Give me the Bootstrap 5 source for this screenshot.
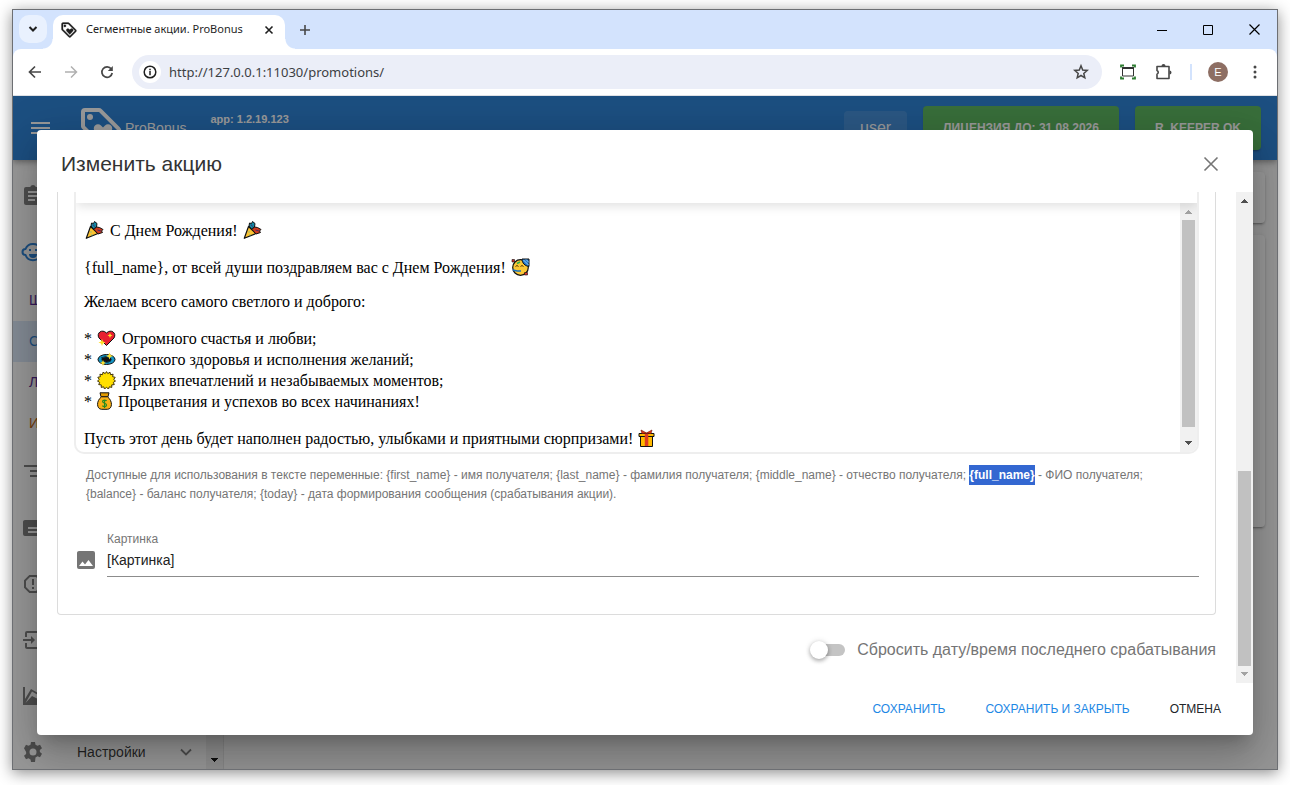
<!DOCTYPE html>
<html lang="ru">
<head>
<meta charset="utf-8">
<meta name="viewport" content="width=device-width, initial-scale=1">
<title>Сегментные акции. ProBonus</title>
<link href="https://cdn.jsdelivr.net/npm/bootstrap@5.3.0/dist/css/bootstrap.min.css" rel="stylesheet">
<style>
  body { font-family: "Liberation Sans", Arial, sans-serif; font-size: 14px; background: #fff; padding: 9px 12px 15px; height: 100vh; overflow: hidden; }
  svg { display: block; flex: none; }
  button { border: 0; background: none; padding: 0; color: inherit; }
  .browser { height: 100%; border: 1px solid #6d6f73; box-shadow: 0 3px 14px rgba(0,0,0,.45); background: #d3e3fd; }

  /* browser chrome */
  .tabstrip { height: 39px; flex: none; font-family: "Noto Sans", sans-serif; padding-left: 6px; color: #1f1f1f; }
  .tab-search { width: 28px; height: 28px; margin-top: 5px; border-radius: 10px; background: #e9f1fe; }
  .tab { position: relative; width: 232px; height: 34px; margin: 5px 0 0 6px; padding: 0 10px 5px 7px; background: #fff; border-radius: 10px 10px 0 0; font-size: 11px; }
  .tab::before, .tab::after { content: ""; position: absolute; bottom: 0; width: 10px; height: 10px; }
  .tab::before { left: -10px; background: radial-gradient(circle at 0 0, transparent 9px, #fff 10px); }
  .tab::after { right: -10px; background: radial-gradient(circle at 100% 0, transparent 9px, #fff 10px); }
  .tab-add { height: 39px; width: 40px; }
  .win-btn { width: 46px; height: 39px; }
  .addressbar { height: 47px; flex: none; background: #fff; border-bottom: 1px solid #dfe1e5; border-radius: 8px 8px 0 0; padding: 0 11px; color: #474747; }
  .tool { width: 22px; height: 22px; margin-right: 14px; }
  .omnibox { height: 34px; border-radius: 17px; background: #ebeef8; padding: 0 12px 0 7px; }
  .site-info { width: 22px; height: 22px; border-radius: 50%; background: #fff; }
  .omnibox input { border: 0; background: none; outline: 0; padding: 0; color: #3c4043; font: 13px "Noto Sans", sans-serif; min-width: 0; }
  .avatar { width: 20px; height: 20px; border-radius: 50%; background: #8d6e63; color: #fff; font-size: 11px; }

  /* application */
  .app { position: relative; flex: 1 1 0; min-height: 0; overflow: hidden; background: #fafafa; }
  .appbar { height: 64px; flex: none; background: #1976d2; color: #fff; padding: 0 16px 0 14px; position: relative; z-index: 1; box-shadow: 0 2px 4px -1px rgba(0,0,0,.2), 0 4px 5px rgba(0,0,0,.14), 0 1px 10px rgba(0,0,0,.12); }
  .version { font-size: 11px; font-weight: 700; line-height: 16px; padding-bottom: 18px; }
  .user-chip { background: rgba(255,255,255,.12); border-radius: 4px; height: 34px; font-size: 16px; padding: 0 16px; }
  .status-btn { background: #4caf50; border-radius: 4px; height: 44px; font-size: 12px; font-weight: 700; padding: 0 20px; box-shadow: 0 3px 1px -2px rgba(0,0,0,.2), 0 2px 2px rgba(0,0,0,.14); }
  .sidebar { width: 211px; flex: none; background: #fff; border-right: 1px solid #e0e0e0; overflow: hidden; }
  .side-list { padding-top: 8px; }
  .side-item { height: 56px; flex: none; padding: 0 12px 0 8px; color: rgba(0,0,0,.87); }
  .side-item svg { fill: #757575; }
  .side-sub { height: 41px; flex: none; padding-left: 16px; color: #4a148c; text-decoration: none; }
  .side-sub.active { background: #d9e8f9; color: #1976d2; }
  .side-sub.accent { color: #bf5b00; }
  .panel { background: #fff; border-radius: 4px; box-shadow: 0 3px 1px -2px rgba(0,0,0,.2), 0 2px 2px rgba(0,0,0,.14), 0 1px 5px rgba(0,0,0,.12); }
  .panel-small { height: 51px; margin-bottom: 12px; }
  .panel-large { height: 292px; }
  .scrim { position: absolute; inset: 0; z-index: 2; background: rgba(33,33,33,.46); padding: 34px 24px; }

  /* dialog */
  .dialog { background: #fff; border-radius: 4px; box-shadow: 0 11px 15px -7px rgba(0,0,0,.2), 0 24px 38px 3px rgba(0,0,0,.14), 0 9px 46px 8px rgba(0,0,0,.12); height: 100%; }
  .dialog-head { height: 62px; flex: none; padding: 6px 30px 0 24px; }
  .dialog-head h1 { font-size: 21px; line-height: 32px; margin: 0; color: #333; font-weight: 400; }
  .dialog-body { min-height: 0; }
  .dialog-pane { padding: 0 20px; min-width: 0; }
  .box { border: 1px solid #dcdcdc; border-top: 0; border-radius: 0 0 4px 4px; padding: 0 16px 37px; }
  .editor { border: 2px solid #eee; border-top: 0; border-radius: 0 0 10px 10px; overflow: hidden; }
  .editor-tools { height: 11px; position: relative; z-index: 1; background: #fff; box-shadow: 0 2px 12px rgba(0,0,0,.15); }
  .editor-text { height: 249px; padding: 16px 8px 0; overflow: hidden; outline: 0; color: #000; font: 16px/18px "Liberation Serif", "Times New Roman", serif; }
  .editor-text p { margin: 0 0 16px; }
  .editor-text svg { display: inline-block; vertical-align: -3px; margin: 2px 2px 0 1px; }
  .hint { font-size: 12px; line-height: 19px; color: #757575; padding: 12px 40px 0 12px; margin: 0 0 27px; }
  .hint span { background: #3367d1; color: #fff; font-weight: 700; padding: 3px 0; }
  .field { padding-left: 1px; }
  .field svg { margin-top: 12px; }
  .field label { display: block; font-size: 12px; line-height: 16px; color: #757575; }
  .field input { display: block; width: 100%; height: 30px; border: 0; border-bottom: 1px solid #8c8c8c; outline: 0; padding: 0 0 4px; font-size: 14px; color: #222; }
  .reset-row { padding-top: 21px; gap: 12px; }
  .reset-row label { font-size: 16px; line-height: 28px; color: #757575; }
  .toggle { appearance: none; position: relative; width: 35px; height: 18px; margin: 0; }
  .toggle::before { content: ""; position: absolute; inset: 3px 0 3px 4px; border-radius: 6px; background: #c4c4c4; }
  .toggle::after { content: ""; position: absolute; left: 0; top: 0; width: 18px; height: 18px; border-radius: 50%; background: #fff; box-shadow: 0 2px 4px rgba(0,0,0,.3), 0 0 6px rgba(0,0,0,.12); }
  .dialog-foot { height: 52px; flex: none; gap: 40px; padding: 0 32px; font-size: 12px; }
  .dialog-foot .main { color: #1e88e5; }

  .sbar { width: 17px; flex: none; background: #f1f1f1; }
  .sbar div { margin: 0 2px; background: #c1c1c1; }
  .thumb-top { height: 83%; margin-bottom: auto !important; }
  .thumb-end { height: 195px; margin-top: auto !important; }
</style>
</head>
<body>
<svg width="0" height="0" class="position-absolute" aria-hidden="true">
  <symbol id="tag" viewBox="0 0 24 24"><path fill-rule="evenodd" d="M21.4 11.6l-9-9A2 2 0 0 0 11 2H4a2 2 0 0 0-2 2v7c0 .6.2 1.1.6 1.4l9 9a2 2 0 0 0 2.8 0l7-7a2 2 0 0 0 0-2.8zM13 20l-9-9V4h7l9 9z"/><circle cx="6.5" cy="6.5" r="1.5"/><path d="M13 18l-4-4.2a2.1 2.1 0 0 1 3-3l1 1 1-1a2.1 2.1 0 0 1 3 3z"/></symbol>
  <symbol id="popper" viewBox="0 0 18 18"><path d="M5 5.500l7.500 7L.8 17.300z" fill="#fcc332" stroke="#111" stroke-width="1.200" stroke-linejoin="round"/><path d="M5.500 5l.5-3 2 .5 1-2 2.500 2-.5 3.500-3 2z" fill="#1388a5" stroke="#111"/><path d="M8.500 8.500l2.500-2.500 3 .5 3.500 2-1.500 1.500 1 1.500-4.500 1.500z" fill="#d13a1e" stroke="#111"/><path d="M12 9l3.500 1M7.500 3.500l1.500 2" stroke="#472a63" fill="none"/><path d="M5 11h1M6 14h1" stroke="#30b5ba"/></symbol>
  <symbol id="up" viewBox="0 0 17 17"><path d="M5 11h7v-1h-1V9h-1V8H9V7H8v1H7v1H6v1H5z"/></symbol>
  <symbol id="down" viewBox="0 0 17 17"><path d="M5 6h7v1h-1v1h-1v1H9v1H8V9H7V8H6V7H5z"/></symbol>
</svg>

<div class="browser d-flex flex-column">
  <div class="tabstrip d-flex">
    <button class="tab-search d-flex align-items-center justify-content-center" aria-label="Поиск вкладок"><svg width="10" height="10" viewBox="0 0 10 10" fill="none" stroke="#1f1f1f" stroke-width="2"><path d="M1.500 3L5 6.500 8.500 3"/></svg></button>
    <div class="tab d-flex align-items-center">
      <svg width="18" height="18" fill="#1f1f1f" stroke="#1f1f1f" stroke-width=".4"><use href="#tag"/></svg>
      <span class="ms-1 ps-1 flex-grow-1 text-nowrap">Сегментные акции. ProBonus</span>
      <button aria-label="Закрыть вкладку"><svg width="12" height="12" viewBox="0 0 12 12" stroke="#1f1f1f" stroke-width="1.600"><path d="M2.500 2.500l7 7M9.500 2.500l-7 7"/></svg></button>
    </div>
    <button class="tab-add d-flex align-items-center justify-content-center" aria-label="Новая вкладка"><svg width="12" height="12" viewBox="0 0 12 12" stroke="#474747" stroke-width="1.600"><path d="M6 1v10M1 6h10"/></svg></button>
    <div class="ms-auto d-flex">
      <button class="win-btn d-flex align-items-center justify-content-center" aria-label="Свернуть"><svg width="10" height="10"><path d="M0 5.500h10" stroke="#000"/></svg></button>
      <button class="win-btn d-flex align-items-center justify-content-center" aria-label="Развернуть"><svg width="10" height="10"><path d="M.5.5h9v9h-9z" fill="none" stroke="#000"/></svg></button>
      <button class="win-btn d-flex align-items-center justify-content-center" aria-label="Закрыть"><svg width="11" height="11"><path d="M.5.5l10 10M10.500.5l-10 10" stroke="#000" stroke-width="1.200"/></svg></button>
    </div>
  </div>

  <div class="addressbar d-flex align-items-center">
    <button class="tool" aria-label="Назад"><svg width="22" height="22" viewBox="0 0 22 22" fill="none" stroke="#474747" stroke-width="1.700"><path d="M17 11H6M11 5.500L5.500 11l5.500 5.500"/></svg></button>
    <button class="tool" aria-label="Вперёд"><svg width="22" height="22" viewBox="0 0 22 22" fill="none" stroke="#b0b0b0" stroke-width="1.500"><path d="M5 11h12M11 5.500l5.500 5.500-5.500 5.500"/></svg></button>
    <button class="tool" aria-label="Обновить"><svg width="22" height="22" viewBox="0 0 22 22"><path d="M15.300 8A5.200 5.200 0 1 0 16.200 12" fill="none" stroke="#474747" stroke-width="1.700"/><path d="M16.800 5v5h-5z" fill="#474747"/></svg></button>
    <div class="omnibox d-flex align-items-center flex-grow-1">
      <span class="site-info d-flex align-items-center justify-content-center me-2"><svg width="14" height="14" viewBox="0 0 14 14" fill="none" stroke="#1f1f1f" stroke-width="1.500"><circle cx="7" cy="7" r="5.800"/><path d="M7 6v4.200M7 3.700v1.500"/></svg></span>
      <input class="flex-grow-1" type="text" value="http://127.0.0.1:11030/promotions/" aria-label="Адрес">
      <button aria-label="Добавить в закладки"><svg width="18" height="18" viewBox="0 0 18 18" fill="none" stroke="#474747" stroke-width="1.500"><path d="M9 2.800l1.700 4.200 4.500.400-3.400 3 1 4.400L9 12.500l-3.800 2.300 1-4.400-3.400-3 4.500-.400z"/></svg></button>
    </div>
    <button class="ms-3" aria-label="Снимок экрана"><svg width="20" height="18" viewBox="1 0 20 18" fill="none"><path d="M5.500 5h11v8h-11z" stroke="#333"/><path d="M5 5h12" stroke="#333" stroke-width="2"/><path d="M4 4.500V2.500h3M15 2.500h3v2M4 13.500v2h3M15 15.500h3v-2" stroke="#2e7d32" stroke-width="1.800"/></svg></button>
    <button class="ms-3" aria-label="Расширения"><svg width="20" height="20" viewBox="0 0 20 20"><path d="M3 4.500h12v12H3v-4.300a2 2 0 0 0 0-3.700z" fill="none" stroke="#474747" stroke-width="1.600" stroke-linejoin="round"/><path d="M7.500 4a2 2 0 0 1 4 0zM15.500 8.500a2 2 0 0 1 0 4z" fill="#474747"/></svg></button>
    <svg class="ms-3" width="2" height="16"><path d="M1 0v16" stroke="#d3e3fd" stroke-width="2"/></svg>
    <span class="avatar ms-3 d-flex align-items-center justify-content-center">E</span>
    <button class="ms-3" aria-label="Меню"><svg width="22" height="18" viewBox="0 0 22 18" fill="#474747"><circle cx="11" cy="4" r="1.500"/><circle cx="11" cy="9" r="1.500"/><circle cx="11" cy="14" r="1.500"/></svg></button>
  </div>

  <div class="app d-flex flex-column">
    <header class="appbar d-flex align-items-center">
      <button aria-label="Навигация"><svg width="26" height="24" viewBox="0 0 26 24" fill="#fff"><path d="M4 6h19v2H4zM4 11h19v2H4zM4 16h19v2H4z"/></svg></button>
      <svg class="ms-4" width="48" height="48" fill="#fff"><use href="#tag"/></svg>
      <span>ProBonus</span>
      <span class="version ms-4">app: 1.2.19.123</span>
      <button class="user-chip ms-auto me-3">user</button>
      <button class="status-btn me-3 text-nowrap">ЛИЦЕНЗИЯ ДО: 31.08.2026</button>
      <button class="status-btn text-nowrap">R_KEEPER OK</button>
    </header>
    <div class="d-flex flex-grow-1 overflow-hidden">
      <nav class="sidebar d-flex">
        <div class="side-list d-flex flex-column flex-grow-1">
          <div class="side-item d-flex align-items-center"><svg width="24" height="24" viewBox="0 0 24 24"><path fill-rule="evenodd" d="M19 3h-4.200a3 3 0 0 0-5.600 0H5a2 2 0 0 0-2 2v14c0 1.100.9 2 2 2h14a2 2 0 0 0 2-2V5a2 2 0 0 0-2-2zM7 7h10v2H7zm0 4h10v2H7zm0 4h7v2H7z"/></svg></div>
          <div class="side-item d-flex align-items-center"><svg width="24" height="24" viewBox="0 0 24 24" fill="none"><path d="M12 4a8 8 0 0 1 7.500 5 3 3 0 0 1 0 6 8 8 0 0 1-15 0 3 3 0 0 1 0-6A8 8 0 0 1 12 4z" fill="none" stroke="#1976d2" stroke-width="2"/><path d="M8 10h2M14 10h2" stroke="#1976d2" stroke-width="2"/><path d="M8 14h8a4 4 0 0 1-8 0z" fill="#1976d2"/></svg></div>
          <a class="side-sub d-flex align-items-center" href="#">Ш</a>
          <a class="side-sub active d-flex align-items-center" href="#">С</a>
          <a class="side-sub d-flex align-items-center" href="#">Л</a>
          <a class="side-sub accent d-flex align-items-center" href="#">И</a>
          <div class="side-item d-flex align-items-center"><svg width="24" height="24" viewBox="0 0 24 24"><path d="M3 5h18v2H3zM9 10h12v2H9zM9 15h12v2H9z"/></svg></div>
          <div class="side-item d-flex align-items-center"><svg width="24" height="24" viewBox="0 0 24 24"><path fill-rule="evenodd" d="M4 4h16a2 2 0 0 1 2 2v12a2 2 0 0 1-2 2H4a2 2 0 0 1-2-2V6c0-1.100.9-2 2-2zm3 7v2h12v-2zm0 4v2h12v-2z"/></svg></div>
          <div class="side-item d-flex align-items-center"><svg width="24" height="24" viewBox="0 0 24 24"><path fill-rule="evenodd" d="M8.300 3L3 8.300v7.400L8.300 21h7.400l5.300-5.300V8.300L15.700 3zM9 5h6l4 4v6l-4 4H9l-4-4V9zM11 7h2v6h-2zm0 8h2v2h-2z"/></svg></div>
          <div class="side-item d-flex align-items-center"><svg width="24" height="24" viewBox="0 0 24 24"><path d="M21 3H6a2 2 0 0 0-2 2v4h2V5h15v14H6v-4H4v4c0 1.100.9 2 2 2h15zM2 11h8V8l4 4-4 4v-3H2z"/></svg></div>
          <div class="side-item d-flex align-items-center"><svg width="24" height="24" viewBox="0 0 24 24"><path d="M2 3h2v12l6-10 7 4 5-3v2l-5 3-6-3.500L4.500 19 11 12l6 3 5-3v9H2z"/></svg></div>
          <div class="side-item d-flex align-items-center">
            <svg width="24" height="24" viewBox="0 0 24 24"><path fill-rule="evenodd" d="M10 2h4l.5 2.700 2 1.100 2.500-1 2 3.500-2.200 1.700.1 2 2.100 1.700-2 3.500-2.500-1-2 1.200L14 22h-4l-.5-2.600-2-1.200-2.500 1-2-3.500L5.100 14v-2L3 8.300l2-3.500 2.500 1 2-1.100zM12 8.500a3.500 3.500 0 1 0 0 7 3.500 3.500 0 0 0 0-7z"/></svg>
            <span class="ms-3 ps-3 flex-grow-1">Настройки</span>
            <svg width="16" height="16" viewBox="0 0 16 16"><path d="M3 5.500l5 5 5-5" fill="none" stroke="#757575" stroke-width="1.800"/></svg>
          </div>
        </div>
        <div class="sbar d-flex flex-column justify-content-end"><svg width="17" height="17"><use href="#down"/></svg></div>
      </nav>
      <main class="flex-grow-1 p-3 pt-2 pe-2"><div class="pt-1 pe-1"><div class="panel panel-small"></div><div class="panel panel-large"></div></div></main>
    </div>

    <div class="scrim">
      <section class="dialog d-flex flex-column" role="dialog" aria-labelledby="dlg-title">
        <div class="dialog-head d-flex align-items-center justify-content-between">
          <h1 id="dlg-title">Изменить акцию</h1>
          <button aria-label="Закрыть окно"><svg width="24" height="24" viewBox="0 0 24 24" stroke="#757575" stroke-width="1.600"><path d="M5.500 5.500l13 13M18.500 5.500l-13 13"/></svg></button>
        </div>
        <div class="dialog-body d-flex flex-grow-1 overflow-hidden">
          <div class="dialog-pane flex-grow-1">
            <div class="box">
              <div class="editor">
                <div class="editor-tools"></div>
                <div class="d-flex">
                  <div class="editor-text flex-grow-1" role="textbox" aria-multiline="true" aria-label="Текст сообщения" contenteditable="true" spellcheck="false">
                    <p><svg width="19" height="18"><use href="#popper"/></svg> С Днем Рождения! <svg width="19" height="18"><use href="#popper"/></svg></p>
                    <p>{full_name}, от всей души поздравляем вас с Днем Рождения! <svg width="19" height="18" viewBox="0 0 19 18"><circle cx="9.500" cy="9.500" r="7.800" fill="#fcc836" stroke="#111" stroke-width="1.200"/><path d="M11 1h7v7.500C14 8 11 5 11 1z" fill="#2878c8" stroke="#111"/><path d="M12.500 2l5 5M15 1.500l3 3" stroke="#8fd0ff"/><path d="M1 1.500h2.500v2.500H1zM13.500 14.500h3v2.500h-3z" fill="#d32f2f" stroke="#111" stroke-width=".6"/><path d="M4.500 8.500q1.500-2 3 0M9.500 8.500q1.500-2 3 0" fill="none" stroke="#553300"/><path d="M2 12l4 1h4" stroke="#1673c4" fill="none" stroke-width="1.500"/><path d="M6 5.500l3-1.500" stroke="#2fae4e" stroke-width="1.500"/></svg></p>
                    <p>Желаем всего самого светлого и доброго:</p>
                    <p>* <svg width="19" height="18" viewBox="0 0 19 18"><path d="M9.500 16.500L2 9C-1 4 5-.5 9.500 4 14-.5 20 4 17 9z" fill="#e81f30" stroke="#111"/><path d="M5 10l1 2.500 2.500 1-2.500 1L5 17l-1-2.500-2.500-1 2.500-1zM13 4l.8 1.700 1.700.8-1.700.8L13 9l-.8-1.700-1.700-.8 1.700-.8z" fill="#ffdf2b"/></svg> Огромного счастья и любви;<br>
                    * <svg width="19" height="18" viewBox="0 0 19 18"><ellipse cx="9.500" cy="9.500" rx="8.500" ry="5" fill="#1494c4" stroke="#111"/><ellipse cx="9.500" cy="9.500" rx="5" ry="2.500" fill="#111"/><path d="M4 8q5-3 9 0M5 11q5 3 9-.5" fill="none" stroke="#0a3142"/><path d="M12.500 2.500l1 2.500 2.500 1-2.500 1-1 2.500-1-2.500-2.500-1 2.500-1zM6 10l.9 2 2 .9-2 .9L6 16l-.9-2.200-2-.9 2-.9z" fill="#ffe02e"/></svg> Крепкого здоровья и исполнения желаний;<br>
                    * <svg width="19" height="18" viewBox="0 0 19 18"><path d="M9.500.6l1.300 2 2.200-1.400.5 2.500 2.600-.5-.5 2.500 2.600.6-1.500 2.200 1.800 1.500-2.200 1.400 1 2.200-2.600.3.100 2.500-2.500-.6-.8 2.200-2-1.600-2 1.600-.8-2.200-2.500.6.1-2.500-2.600-.3 1-2.200L.5 10l1.800-1.500L.8 6.300l2.600-.6-.5-2.500 2.600.5.500-2.500 2.200 1.400z" fill="#ffe000" stroke="#40330a"/></svg> Ярких впечатлений и незабываемых моментов;<br>
                    * <svg width="15" height="18" viewBox="0 0 15 18"><path d="M3 .8h9l-1 4H4z" fill="#e39b00" stroke="#111"/><path d="M4.500 4.800C-1 9-.5 17 4.500 17.300h6C15.500 17 16 9 10.500 4.800z" fill="#fbb014" stroke="#111"/><path d="M9.600 9c-.8-1.200-4-1.300-4 .6 0 2 4 1.400 4 3.500 0 2-3.200 2-4.200.5M7.600 7.500v8.500" fill="none" stroke="#278b21" stroke-width="1.200"/></svg> Процветания и успехов во всех начинаниях!</p>
                    <p>Пусть этот день будет наполнен радостью, улыбками и приятными сюрпризами! <svg width="17" height="18" viewBox="0 0 17 18"><path d="M2.500 7.500h12v10h-12zM1 4.500h15v3H1z" fill="#ffb900" stroke="#111"/><path d="M6.800 4.500h3.500v12.500H6.800z" fill="#dd3c22"/><path d="M8.500 4L3 1l1 3.500zM8.500 4L14 1l-1 3.500z" fill="#e8391b" stroke="#7c1c0b" stroke-width=".7"/></svg></p>
                  </div>
                  <div class="sbar d-flex flex-column"><svg width="17" height="17" fill="#a3a3a3"><use href="#up"/></svg><div class="thumb-top"></div><svg width="17" height="17" fill="#505050"><use href="#down"/></svg></div>
                </div>
              </div>
              <p class="hint">Доступные для использования в тексте переменные: {first_name} - имя получателя; {last_name} - фамилия получателя; {middle_name} - отчество получателя; <span>{full_name}</span> - ФИО получателя; {balance} - баланс получателя; {today} - дата формирования сообщения (срабатывания акции).</p>
              <div class="field d-flex align-items-center">
                <svg class="me-2" width="24" height="24" viewBox="0 0 24 24"><path fill="#757575" fill-rule="evenodd" d="M4 3h14a2 2 0 0 1 2 2v14a2 2 0 0 1-2 2H4a2 2 0 0 1-2-2V5c0-1.100.9-2 2-2zM4 18h14l-4.500-6-3.500 4.500L7.500 13.500z"/></svg>
                <div class="flex-grow-1"><label for="pic">Картинка</label><input id="pic" type="text" value="[Картинка]"></div>
              </div>
            </div>
            <div class="reset-row d-flex align-items-center justify-content-end">
              <input class="toggle" type="checkbox" role="switch" id="reset"><label for="reset">Сбросить дату/время последнего срабатывания</label>
            </div>
          </div>
          <div class="sbar d-flex flex-column"><svg width="17" height="17" fill="#505050"><use href="#up"/></svg><div class="thumb-end"></div><svg width="17" height="17" fill="#a3a3a3"><use href="#down"/></svg></div>
        </div>
        <div class="dialog-foot d-flex align-items-center justify-content-end">
          <button class="main">СОХРАНИТЬ</button><button class="main">СОХРАНИТЬ И ЗАКРЫТЬ</button><button>ОТМЕНА</button>
        </div>
      </section>
    </div>
  </div>
</div>
<script src="https://cdn.jsdelivr.net/npm/bootstrap@5.3.0/dist/js/bootstrap.bundle.min.js"></script>
</body>
</html>
